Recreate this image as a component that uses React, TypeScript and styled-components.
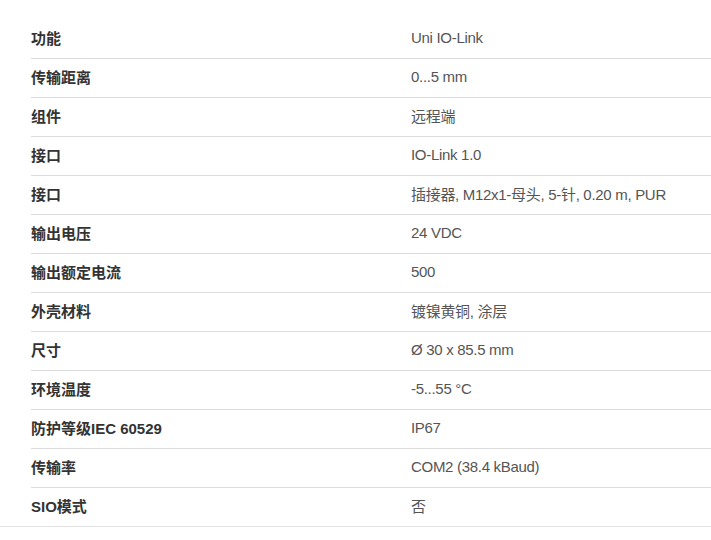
import styled, { createGlobalStyle } from 'styled-components';

const GlobalStyle = createGlobalStyle`
  html, body {
    margin: 0;
    padding: 0;
    background: #fff;
  }
  body {
    font-family: "Liberation Sans", Arial, "Noto Sans CJK SC", sans-serif;
  }
`;

const specs: [string, string][] = [
  ['功能', 'Uni IO-Link'],
  ['传输距离', '0...5 mm'],
  ['组件', '远程端'],
  ['接口', 'IO-Link 1.0'],
  ['接口', '插接器, M12x1-母头, 5-针, 0.20 m, PUR'],
  ['输出电压', '24 VDC'],
  ['输出额定电流', '500'],
  ['外壳材料', '镀镍黄铜, 涂层'],
  ['尺寸', 'Ø 30 x 85.5 mm'],
  ['环境温度', '-5...55 °C'],
  ['防护等级IEC 60529', 'IP67'],
  ['传输率', 'COM2 (38.4 kBaud)'],
  ['SIO模式', '否'],
];

const App = () => {
  return (
    <>
      <GlobalStyle />
      <Table>
        {specs.map(([label, value], i) => (
          <Row key={i} $first={i === 0}>
            <Label>{label}</Label>
            <Value>{value}</Value>
          </Row>
        ))}
      </Table>
    </>
  );
};

const Table = styled.div`
  padding-top: 19px;
  border-bottom: 1px solid #e2e2e2;
`;

const Row = styled.div<{ $first: boolean }>`
  display: grid;
  grid-template-columns: 380px 1fr;
  align-items: center;
  box-sizing: border-box;
  height: 39px;
  padding-bottom: 3px;
  margin-left: 31px;
  border-top: ${(p) => (p.$first ? '1px solid transparent' : '1px solid #dcdcdc')};
`;

const Label = styled.div`
  font-size: 15px;
  font-weight: 700;
  color: #333;
`;

const Value = styled.div`
  font-size: 15px;
  letter-spacing: -0.3px;
  color: #555;
`;

export default App;
